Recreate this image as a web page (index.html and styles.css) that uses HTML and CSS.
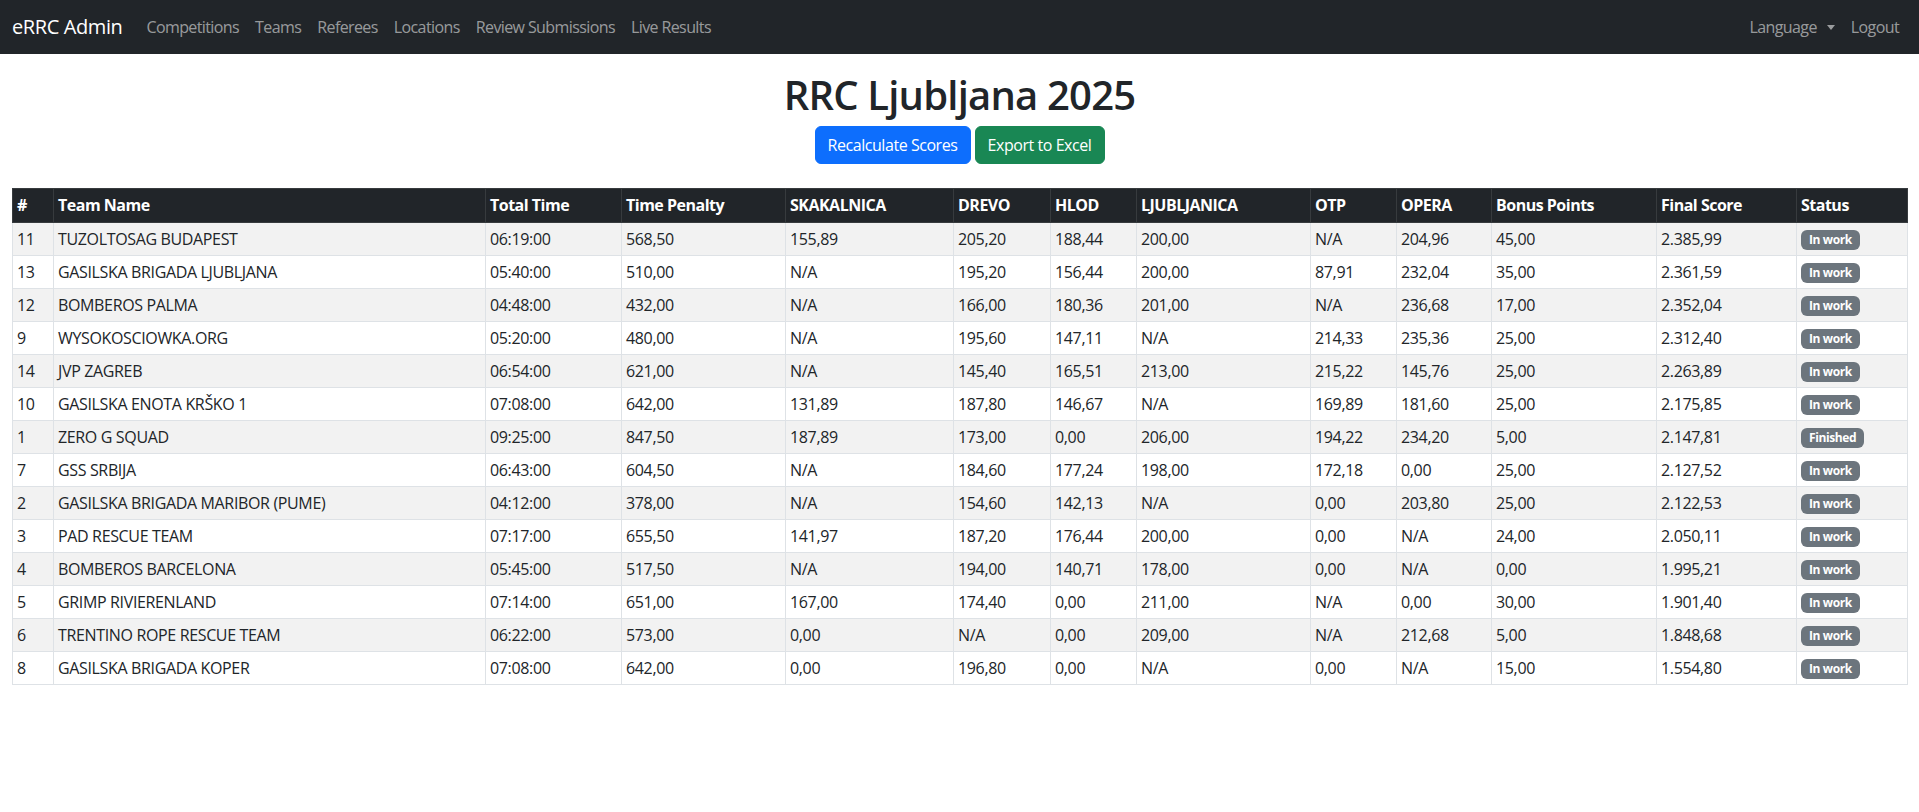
FILE: index.html
```html
<!DOCTYPE html>
<html lang="en">
<head>
<meta charset="utf-8">
<title>RRC Ljubljana 2025</title>
<link rel="stylesheet" href="styles.css">
</head>
<body>
<nav class="navbar">
  <div class="nav-left">
    <a class="brand" href="#">eRRC Admin</a>
    <a class="nav-link" href="#">Competitions</a>
    <a class="nav-link" href="#">Teams</a>
    <a class="nav-link" href="#">Referees</a>
    <a class="nav-link" href="#">Locations</a>
    <a class="nav-link" href="#">Review Submissions</a>
    <a class="nav-link" href="#">Live Results</a>
  </div>
  <div class="nav-right">
    <a class="nav-link dropdown-toggle" href="#">Language</a>
    <a class="nav-link" href="#">Logout</a>
  </div>
</nav>

<main class="container">
  <h1 class="title">RRC Ljubljana 2025</h1>
  <div class="actions">
    <button class="btn btn-primary">Recalculate Scores</button>
    <button class="btn btn-success">Export to Excel</button>
  </div>

  <table class="results">
    <colgroup>
      <col class="c-rank"><col class="c-team"><col class="c-time"><col class="c-pen"><col class="c-skak"><col class="c-drevo"><col class="c-hlod"><col class="c-ljub"><col class="c-otp"><col class="c-opera"><col class="c-bonus"><col class="c-final"><col class="c-status">
    </colgroup>
    <thead>
      <tr><th>#</th><th>Team Name</th><th>Total Time</th><th>Time Penalty</th><th>SKAKALNICA</th><th>DREVO</th><th>HLOD</th><th>LJUBLJANICA</th><th>OTP</th><th>OPERA</th><th>Bonus Points</th><th>Final Score</th><th>Status</th></tr>
    </thead>
    <tbody>
      <tr><td>11</td><td>TUZOLTOSAG BUDAPEST</td><td>06:19:00</td><td>568,50</td><td>155,89</td><td>205,20</td><td>188,44</td><td>200,00</td><td>N/A</td><td>204,96</td><td>45,00</td><td>2.385,99</td><td><span class="badge">In work</span></td></tr>
      <tr><td>13</td><td>GASILSKA BRIGADA LJUBLJANA</td><td>05:40:00</td><td>510,00</td><td>N/A</td><td>195,20</td><td>156,44</td><td>200,00</td><td>87,91</td><td>232,04</td><td>35,00</td><td>2.361,59</td><td><span class="badge">In work</span></td></tr>
      <tr><td>12</td><td>BOMBEROS PALMA</td><td>04:48:00</td><td>432,00</td><td>N/A</td><td>166,00</td><td>180,36</td><td>201,00</td><td>N/A</td><td>236,68</td><td>17,00</td><td>2.352,04</td><td><span class="badge">In work</span></td></tr>
      <tr><td>9</td><td>WYSOKOSCIOWKA.ORG</td><td>05:20:00</td><td>480,00</td><td>N/A</td><td>195,60</td><td>147,11</td><td>N/A</td><td>214,33</td><td>235,36</td><td>25,00</td><td>2.312,40</td><td><span class="badge">In work</span></td></tr>
      <tr><td>14</td><td>JVP ZAGREB</td><td>06:54:00</td><td>621,00</td><td>N/A</td><td>145,40</td><td>165,51</td><td>213,00</td><td>215,22</td><td>145,76</td><td>25,00</td><td>2.263,89</td><td><span class="badge">In work</span></td></tr>
      <tr><td>10</td><td>GASILSKA ENOTA KRŠKO 1</td><td>07:08:00</td><td>642,00</td><td>131,89</td><td>187,80</td><td>146,67</td><td>N/A</td><td>169,89</td><td>181,60</td><td>25,00</td><td>2.175,85</td><td><span class="badge">In work</span></td></tr>
      <tr><td>1</td><td>ZERO G SQUAD</td><td>09:25:00</td><td>847,50</td><td>187,89</td><td>173,00</td><td>0,00</td><td>206,00</td><td>194,22</td><td>234,20</td><td>5,00</td><td>2.147,81</td><td><span class="badge">Finished</span></td></tr>
      <tr><td>7</td><td>GSS SRBIJA</td><td>06:43:00</td><td>604,50</td><td>N/A</td><td>184,60</td><td>177,24</td><td>198,00</td><td>172,18</td><td>0,00</td><td>25,00</td><td>2.127,52</td><td><span class="badge">In work</span></td></tr>
      <tr><td>2</td><td>GASILSKA BRIGADA MARIBOR (PUME)</td><td>04:12:00</td><td>378,00</td><td>N/A</td><td>154,60</td><td>142,13</td><td>N/A</td><td>0,00</td><td>203,80</td><td>25,00</td><td>2.122,53</td><td><span class="badge">In work</span></td></tr>
      <tr><td>3</td><td>PAD RESCUE TEAM</td><td>07:17:00</td><td>655,50</td><td>141,97</td><td>187,20</td><td>176,44</td><td>200,00</td><td>0,00</td><td>N/A</td><td>24,00</td><td>2.050,11</td><td><span class="badge">In work</span></td></tr>
      <tr><td>4</td><td>BOMBEROS BARCELONA</td><td>05:45:00</td><td>517,50</td><td>N/A</td><td>194,00</td><td>140,71</td><td>178,00</td><td>0,00</td><td>N/A</td><td>0,00</td><td>1.995,21</td><td><span class="badge">In work</span></td></tr>
      <tr><td>5</td><td>GRIMP RIVIERENLAND</td><td>07:14:00</td><td>651,00</td><td>167,00</td><td>174,40</td><td>0,00</td><td>211,00</td><td>N/A</td><td>0,00</td><td>30,00</td><td>1.901,40</td><td><span class="badge">In work</span></td></tr>
      <tr><td>6</td><td>TRENTINO ROPE RESCUE TEAM</td><td>06:22:00</td><td>573,00</td><td>0,00</td><td>N/A</td><td>0,00</td><td>209,00</td><td>N/A</td><td>212,68</td><td>5,00</td><td>1.848,68</td><td><span class="badge">In work</span></td></tr>
      <tr><td>8</td><td>GASILSKA BRIGADA KOPER</td><td>07:08:00</td><td>642,00</td><td>0,00</td><td>196,80</td><td>0,00</td><td>N/A</td><td>0,00</td><td>N/A</td><td>15,00</td><td>1.554,80</td><td><span class="badge">In work</span></td></tr>
    </tbody>
  </table>
</main>
</body>
</html>
```

FILE: styles.css
```css
* { box-sizing: border-box; }

body {
  margin: 0;
  font-family: "Open Sans", "Noto Sans", sans-serif;
  font-size: 16px;
  line-height: 1.5;
  color: #212529;
  background: #fff;
}

a { text-decoration: none; }

.navbar {
  height: 54px;
  background: #212529;
  padding: 0 12px;
  display: flex;
  align-items: center;
  justify-content: space-between;
}

.nav-left, .nav-right {
  display: flex;
  align-items: center;
}

.brand {
  color: #fff;
  font-size: 20px;
  margin-right: 16px;
  letter-spacing: -0.4px;
}

.nav-link {
  color: rgba(255, 255, 255, 0.55);
  padding: 8px 8px;
  font-size: 16px;
  letter-spacing: -0.6px;
}

.dropdown-toggle::after {
  content: "";
  display: inline-block;
  margin-left: 10px;
  vertical-align: 3px;
  border-top: 5px solid;
  border-left: 4.5px solid transparent;
  border-right: 4.5px solid transparent;
}

.container {
  padding: 0 12px;
}

.title {
  margin: 17px 0 7px;
  text-align: center;
  font-size: 40px;
  font-weight: 600;
  line-height: 48px;
  letter-spacing: -0.8px;
}

.actions {
  display: flex;
  justify-content: center;
  gap: 4px;
  margin-bottom: 24px;
}

.btn {
  font-family: inherit;
  font-size: 16px;
  line-height: 24px;
  padding: 6px 12px;
  border: 1px solid transparent;
  border-radius: 6px;
  color: #fff;
  cursor: pointer;
  letter-spacing: -0.45px;
}

.btn-primary { background: #0d6efd; border-color: #0d6efd; width: 156px; }
.btn-success { background: #198754; border-color: #198754; width: 130px; }

.results {
  width: 100%;
  table-layout: fixed;
  border-collapse: collapse;
  font-size: 16px;
}

.c-rank { width: 41px; }
.c-team { width: 432px; }
.c-time { width: 136px; }
.c-pen { width: 164px; }
.c-skak { width: 168px; }
.c-drevo { width: 97px; }
.c-hlod { width: 86px; }
.c-ljub { width: 174px; }
.c-otp { width: 86px; }
.c-opera { width: 95px; }
.c-bonus { width: 165px; }
.c-final { width: 140px; }
.c-status { width: 111px; }

.results th,
.results td {
  text-align: left;
  padding: 4px 4px;
  line-height: 24px;
  border: 1px solid #dee2e6;
  white-space: nowrap;
  overflow: hidden;
  letter-spacing: -0.35px;
}

.results th {
  background: #212529;
  color: #fff;
  font-weight: 700;
  border-color: #373b3e;
  padding-bottom: 5px;
  letter-spacing: -0.5px;
}

.results tbody tr:nth-child(odd) td {
  background: #f2f2f2;
}

.badge {
  display: inline-block;
  background: #6c757d;
  color: #fff;
  font-size: 12px;
  font-weight: 700;
  line-height: 1;
  padding: 4px 8px;
  border-radius: 6px;
  vertical-align: 1px;
  letter-spacing: -0.4px;
}
```
